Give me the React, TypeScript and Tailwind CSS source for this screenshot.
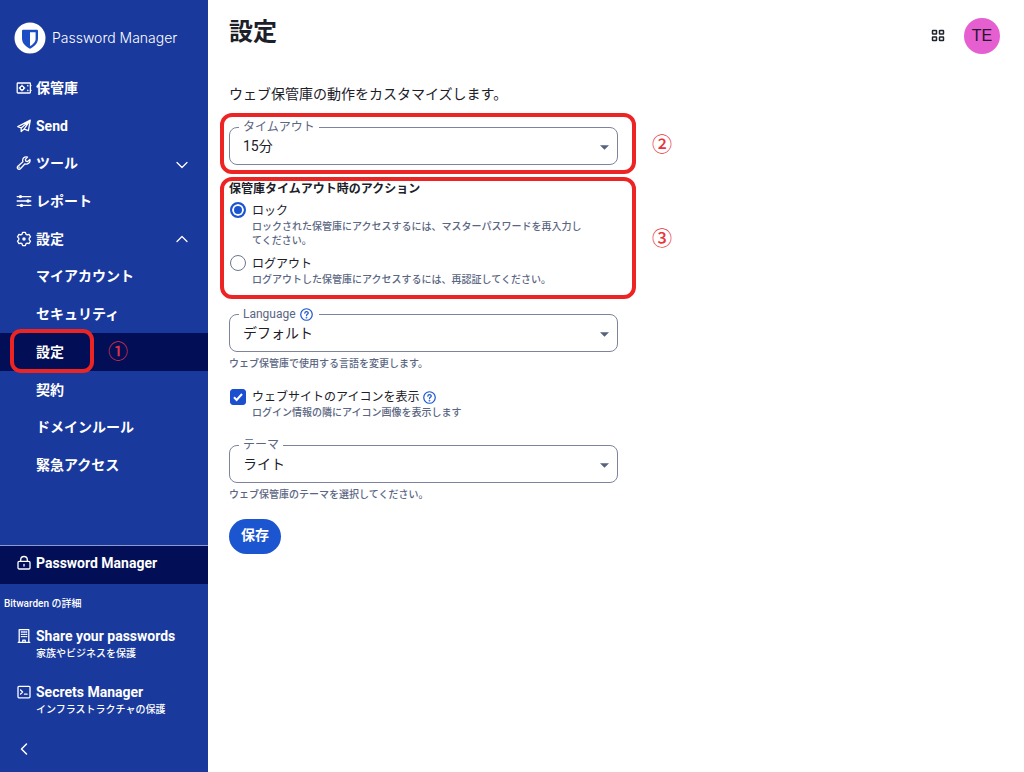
import React, { useState } from "react";
import { ChevronDown, ChevronLeft, ChevronUp } from "lucide-react";

const svgProps = {
  viewBox: "0 0 16 16",
  fill: "none",
  stroke: "currentColor",
  strokeWidth: 1.3,
  strokeLinecap: "round" as const,
  strokeLinejoin: "round" as const,
  className: "w-4 h-4 shrink-0",
  "aria-hidden": true,
};

function VaultIcon() {
  return (
    <svg {...svgProps}>
      <rect x="1.2" y="3" width="13.2" height="10" rx="0.8" />
      <circle cx="6" cy="8" r="1.9" />
      <path d="M6 5.2v.9M6 9.9v.9M3.3 8h.8M7.9 8h.8M11.8 5.3v.6M11.8 10.1v.6M14.4 5.6h.6M14.4 10.4h.6" />
    </svg>
  );
}

function SendIcon() {
  return (
    <svg {...svgProps}>
      <path d="M14.3 2.2 1.8 8.6l3.400 1.300L14.300 2.200l-1.900 10.400-4.300-1.500M5.200 9.900v3.700l2.900-2.500M14.300 2.200 8.100 11.100" />
    </svg>
  );
}

function WrenchIcon() {
  return (
    <svg {...svgProps}>
      <path d="M13.9 4.4 11.6 6.5 9.8 6.1 9.4 4.4 11.5 2.1C9.6 1.4 7.4 2.3 6.8 4.3c-.3.9-.2 1.7.1 2.4L1.9 11.2c-.8.8-.8 1.9-.1 2.6.7.7 1.9.7 2.6-.1L9 8.8c.8.3 1.6.4 2.4.1 2-.6 3.200-2.600 2.500-4.500Z" />
      <circle cx="3.3" cy="12.4" r="0.3" />
    </svg>
  );
}

function SlidersIcon() {
  return (
    <svg {...svgProps}>
      <path d="M1.2 3.600h13.600M1.200 8h13.600M1.200 12.400h13.600" />
      <g fill="currentColor" stroke="none">
        <circle cx="4.500" cy="3.600" r="1.700" />
        <circle cx="12" cy="8" r="1.700" />
        <circle cx="5.500" cy="12.400" r="1.700" />
      </g>
    </svg>
  );
}

function GearIcon() {
  return (
    <svg {...svgProps}>
      <path d="M6.600 1.400h2.800l.5 1.700 1.300.8 1.800-.5 1.500 2.500L13.200 7.200v1.600l1.300 1.300-1.500 2.500-1.800-.5-1.300.8-.5 1.700H6.600l-.5-1.700-1.300-.8-1.800.5-1.500-2.500L2.800 8.800V7.200L1.500 5.900 3 3.400l1.800.5 1.300-.8Z" />
      <circle cx="8" cy="8" r="1.100" fill="currentColor" />
    </svg>
  );
}

function LockIcon() {
  return (
    <svg {...svgProps}>
      <rect x="2" y="6.300" width="12" height="7.700" rx="1.200" />
      <path d="M4.700 6.200V4.800a3.300 3.300 0 0 1 6.600 0v1.400M8 9.300v1.800" />
    </svg>
  );
}

function BuildingIcon() {
  return (
    <svg {...svgProps}>
      <path d="M3.200 14.300V1.700h9.600v12.600M2.200 14.300h11.600M6.800 14.300v-2.100h2.400v2.100M5.400 4h1M7.600 4h1M9.800 4h1M5.400 6.300h1M7.600 6.300h1M9.800 6.300h1M5.400 8.600h1M7.600 8.600h1M9.800 8.600h1" />
    </svg>
  );
}

function TerminalIcon() {
  return (
    <svg {...svgProps}>
      <rect x="2" y="2.300" width="12" height="11.500" rx="1" />
      <path d="m4.600 6 2 2-2 2M8.500 10.200h2.600" />
    </svg>
  );
}

function HelpIcon() {
  return (
    <svg viewBox="0 0 14 14" fill="none" stroke="currentColor" strokeWidth="1.3" strokeLinecap="round" className="w-[13px] h-[13px]" aria-hidden="true">
      <circle cx="7" cy="7" r="6.200" />
      <path d="M5.200 5.600c0-2.300 3.700-2.300 3.700-.1 0 1.300-1.900 1.300-1.900 2.600" />
      <circle cx="7" cy="10.300" r="0.300" fill="currentColor" />
    </svg>
  );
}

function Logo() {
  return (
    <svg viewBox="0 0 32 32" className="w-8 h-8 shrink-0" aria-hidden="true">
      <circle cx="16" cy="16" r="15.500" fill="#fff" />
      <path d="M9 7.800h14a1 1 0 0 1 1 1v7.700c0 5-4.200 8.300-8 10.200-3.800-1.900-8-5.200-8-10.200V8.800a1 1 0 0 1 1-1Z" fill="#1b4dc4" />
      <path d="M16 10.300h5.600v6.400c0 3.300-2.600 5.600-5.600 7.300Z" fill="#fff" />
    </svg>
  );
}

const topItems = [
  { label: "保管庫", icon: <VaultIcon /> },
  { label: "Send", icon: <SendIcon /> },
  { label: "ツール", icon: <WrenchIcon />, chevron: <ChevronDown className="w-5 h-5 mt-1" strokeWidth={1.5} /> },
  { label: "レポート", icon: <SlidersIcon /> },
  { label: "設定", icon: <GearIcon />, chevron: <ChevronUp className="w-5 h-5" strokeWidth={1.5} /> },
];

const subItems = ["マイアカウント", "セキュリティ", "設定", "契約", "ドメインルール", "緊急アクセス"];

const products = [
  { name: "Share your passwords", note: "家族やビジネスを保護", icon: <BuildingIcon /> },
  { name: "Secrets Manager", note: "インフラストラクチャの保護", icon: <TerminalIcon /> },
];

function Sidebar() {
  return (
    <aside className="w-52 shrink-0 bg-[#1a399c] text-white flex flex-col pt-[22px]">
      <a href="#home" className="flex items-center gap-[6px] pl-[14px]">
        <Logo />
        <span className="font-[Inter,sans-serif] font-light text-sm leading-5 whitespace-nowrap">Password Manager</span>
      </a>

      <nav className="grid auto-rows-fr min-h-[415px] mt-[15px] text-sm font-bold">
        {topItems.map((item) => (
          <a key={item.label} href="#nav" className="flex items-center pl-4 pr-4">
            {item.icon}
            <span className="ml-1 flex-1">{item.label}</span>
            {item.chevron}
          </a>
        ))}
        {subItems.map((label) =>
          label === "設定" ? (
            <a key={label} href="#nav" aria-current="page" className="relative flex items-center pl-9 bg-[#020f57]">
              {label}
              <span className="absolute left-[10px] -top-1 w-[84px] h-11 border-4 border-[#ec2524] rounded-[11px]" />
              <span className="ml-11 text-xl leading-5 font-medium text-[#dc3048]">①</span>
            </a>
          ) : (
            <a key={label} href="#nav" className="flex items-center pl-9">
              {label}
            </a>
          )
        )}
      </nav>

      <div className="mt-auto">
        <a href="#pm" className="flex items-center gap-1 h-[39px] pb-1 pl-4 bg-[#020f57] border-t border-[#8a9bd0] text-sm font-bold">
          <LockIcon />
          Password Manager
        </a>
        <p className="mt-3 pl-1 text-[10px] leading-4 font-medium">Bitwarden の詳細</p>
        {products.map((product) => (
          <a key={product.name} href="#product" className="flex gap-1 h-14 pt-4 pl-4">
            {product.icon}
            <span className="whitespace-nowrap">
              <span className="block text-sm leading-4 font-bold">{product.name}</span>
              <span className="block mt-[2px] text-[10px] leading-4 font-medium">{product.note}</span>
            </span>
          </a>
        ))}
        <button aria-label="閉じる" className="block ml-[14px] mt-[15px] mb-[13px]">
          <ChevronLeft className="w-5 h-5" strokeWidth={1.8} />
        </button>
      </div>
    </aside>
  );
}

function SelectField({ id, label, value, help }: { id: string; label: string; value: string; help?: boolean }) {
  return (
    <fieldset className="relative border border-[#7c849d] rounded-lg pl-[9px] pb-[6px]">
      <legend className="px-1 text-xs leading-[14px] text-[#5a6682]">
        <span className="flex items-center gap-1">
          <label htmlFor={id}>{label}</label>
          {help && (
            <button type="button" aria-label="ヘルプ" className="text-[#1b55d0] mr-[2px]">
              <HelpIcon />
            </button>
          )}
        </span>
      </legend>
      <select id={id} className="block w-full appearance-none bg-transparent pl-1 h-6 text-sm leading-6 text-[#1b2029] outline-none">
        <option>{value}</option>
      </select>
      <svg viewBox="0 0 10 5" className="absolute right-2 top-[11px] w-[9px] h-[5px] fill-[#56627f] pointer-events-none" aria-hidden="true">
        <path d="M0 0h10L5 5Z" />
      </svg>
    </fieldset>
  );
}

function ActionOption({ id, label, note, checked, onChange }: { id: string; label: string; note: string; checked: boolean; onChange: () => void }) {
  return (
    <div className="flex gap-[6px] pl-[1px]">
      <input
        type="radio"
        name="action"
        id={id}
        checked={checked}
        onChange={onChange}
        className="appearance-none w-4 h-4 shrink-0 rounded-full border border-[#6b7690] checked:border-[#1b55d0] checked:border-2 checked:bg-[#1b55d0] checked:shadow-[inset_0_0_0_2px_white]"
      />
      <div>
        <label htmlFor={id} className="block text-xs leading-[18px] text-[#1b2029]">{label}</label>
        <p className="text-[10px] leading-[14px] font-medium text-[#5a6682]">{note}</p>
      </div>
    </div>
  );
}

export default function App() {
  const [action, setAction] = useState("lock");
  const [showIcons, setShowIcons] = useState(true);

  return (
    <div className="flex min-h-screen bg-white text-[#1b2029] font-[Roboto,'Noto_Sans_CJK_JP',sans-serif]">
      <Sidebar />

      <main className="flex-1 min-w-0 pl-[21px] pr-6 pt-4">
        <header className="flex items-center justify-between h-10">
          <h1 className="text-2xl leading-8 font-bold self-start">設定</h1>
          <div className="flex items-center gap-[18px]">
            <button aria-label="製品の切り替え">
              <svg viewBox="0 0 16 16" className="w-4 h-4" fill="none" stroke="#20242e" strokeWidth="1.500" aria-hidden="true">
                <rect x="2.500" y="2.500" width="4" height="3.500" rx="0.500" />
                <rect x="9.500" y="2.500" width="4" height="3.500" rx="0.500" />
                <rect x="2.500" y="9" width="4" height="3.500" rx="0.500" />
                <rect x="9.500" y="9" width="4" height="3.500" rx="0.500" />
              </svg>
            </button>
            <button className="w-9 h-9 rounded-full bg-[#e55fd1] font-['Liberation_Sans',sans-serif] text-base text-[#26142a]">TE</button>
          </div>
        </header>

        <form className="w-full max-w-[389px]" onSubmit={(e) => e.preventDefault()}>
          <p className="mt-7 text-sm leading-5 whitespace-nowrap">ウェブ保管庫の動作をカスタマイズします。</p>

          <div className="relative mt-4">
            <SelectField id="timeout" label="タイムアウト" value="15分" />
            <span className="absolute -left-[9px] -right-[18px] -top-[7px] -bottom-[9px] border-4 border-[#ec2524] rounded-xl pointer-events-none" />
            <span className="absolute left-[423px] top-[15px] text-xl leading-5 font-medium text-[#e8343a]">②</span>
          </div>

          <div role="radiogroup" aria-labelledby="action-title" className="relative mt-[15px]">
            <h2 id="action-title" className="text-xs leading-[18px] font-bold">保管庫タイムアウト時のアクション</h2>
            <div className="mt-1 pr-8">
              <ActionOption
                id="lock"
                label="ロック"
                note="ロックされた保管庫にアクセスするには、マスターパスワードを再入力してください。"
                checked={action === "lock"}
                onChange={() => setAction("lock")}
              />
            </div>
            <div className="mt-[7px]">
              <ActionOption
                id="logout"
                label="ログアウト"
                note="ログアウトした保管庫にアクセスするには、再認証してください。"
                checked={action === "logout"}
                onChange={() => setAction("logout")}
              />
            </div>
            <span className="absolute -left-[9px] -right-[18px] -top-[3px] -bottom-3 border-4 border-[#ec2524] rounded-xl pointer-events-none" />
            <span className="absolute left-[423px] top-[49px] text-xl leading-5 font-medium text-[#e8343a]">③</span>
          </div>

          <div className="mt-5">
            <SelectField id="language" label="Language" value="デフォルト" help />
            <p className="mt-1 text-[10px] leading-4 font-medium text-[#5a6682]">ウェブ保管庫で使用する言語を変更します。</p>
          </div>

          <div className="flex gap-[6px] mt-4 pl-[1px]">
            <span className="relative w-4 h-4 mt-[1px] shrink-0">
              <input
                type="checkbox"
                id="icons"
                checked={showIcons}
                onChange={() => setShowIcons(!showIcons)}
                className="block appearance-none w-4 h-4 rounded-[3px] border border-[#6b7690] checked:border-[#1b4fd0] checked:bg-[#1b4fd0]"
              />
              {showIcons && (
                <svg viewBox="0 0 16 16" className="absolute inset-0 w-4 h-4 pointer-events-none" fill="none" stroke="#fff" strokeWidth="2" aria-hidden="true">
                  <path d="m4 8.300 2.600 2.700L12 5" />
                </svg>
              )}
            </span>
            <div>
              <div className="flex items-center gap-1 text-xs leading-[18px]">
                <label htmlFor="icons">ウェブサイトのアイコンを表示</label>
                <button type="button" aria-label="ヘルプ" className="text-[#1b55d0]">
                  <HelpIcon />
                </button>
              </div>
              <p className="text-[10px] leading-[14px] font-medium text-[#5a6682]">ログイン情報の隣にアイコン画像を表示します</p>
            </div>
          </div>

          <div className="mt-[18px]">
            <SelectField id="theme" label="テーマ" value="ライト" />
            <p className="mt-1 text-[10px] leading-4 font-medium text-[#5a6682]">ウェブ保管庫のテーマを選択してください。</p>
          </div>

          <button type="submit" className="mt-4 h-[35px] px-3 pb-[3px] rounded-full bg-[#1b55d0] text-white text-sm font-bold">保存</button>
        </form>
      </main>
    </div>
  );
}
